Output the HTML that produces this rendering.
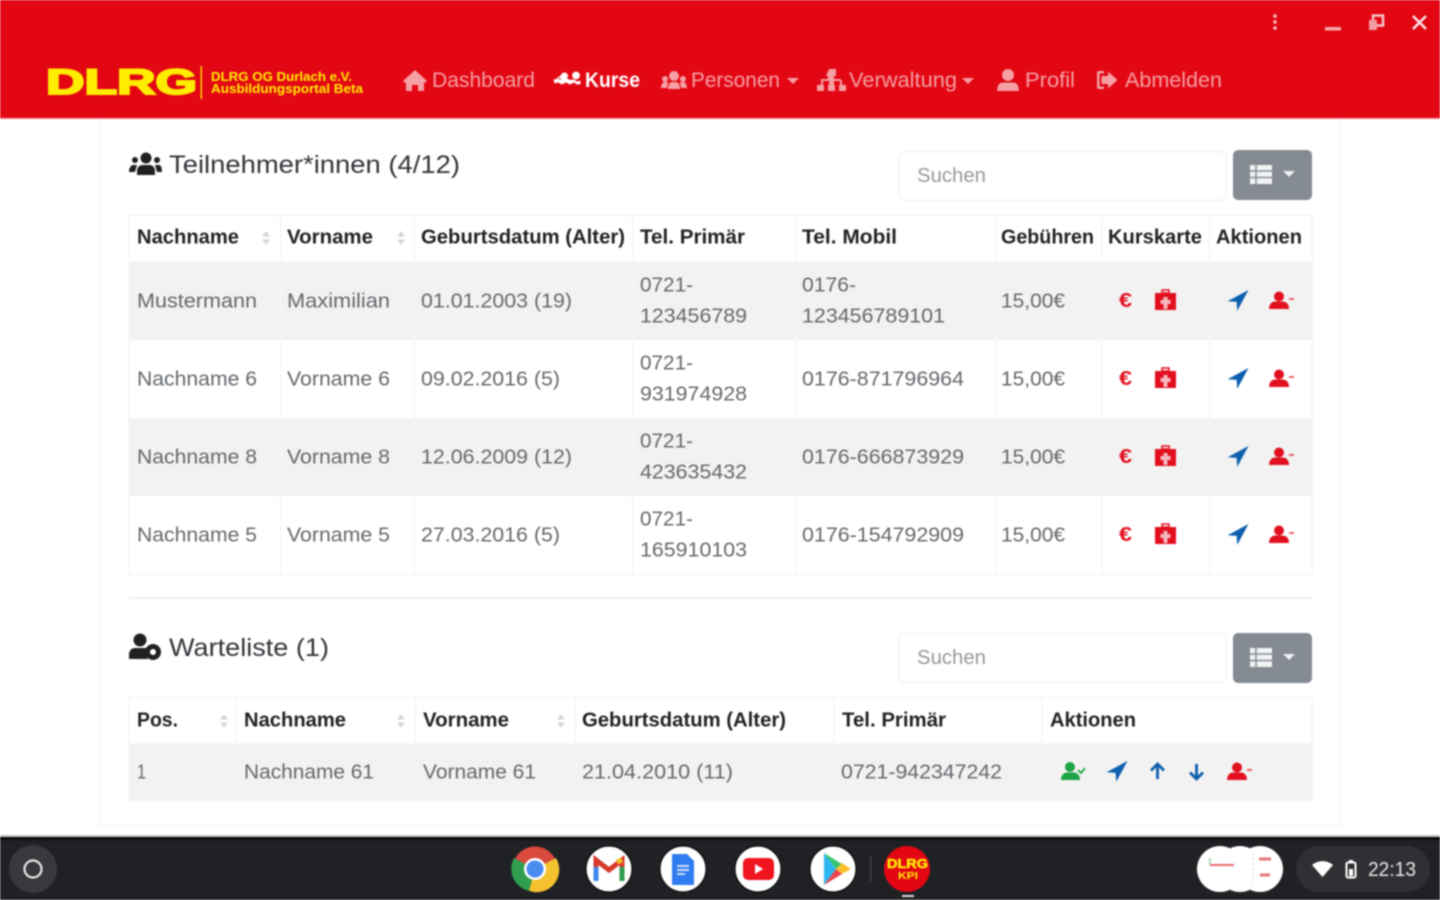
<!DOCTYPE html>
<html lang="de"><head><meta charset="utf-8"><title>DLRG Ausbildungsportal</title>
<style>
html,body{margin:0;padding:0;width:1440px;height:900px;overflow:hidden;background:#fff}
svg{display:block;filter:blur(.8px)}
text{font-family:"Liberation Sans",sans-serif;white-space:pre}
.t{font-size:20px;fill:#64686c;transform:translateY(-.5px)}
.h{font-size:20px;font-weight:bold;fill:#1f2124;transform:translateY(-.5px)}
.n{font-size:21px;fill:#f5a0a4}
.s{font-size:20px;fill:#94989c;transform:translateY(-1px)}
.l{stroke:#f5f5f5;stroke-width:1.500}
.w{stroke:#0c0c0d;stroke-width:1.200}
</style></head><body>
<svg width="1440" height="900" viewBox="0 0 1440 900" xmlns="http://www.w3.org/2000/svg">
<defs>
<g id="userminus"><circle cx="10" cy="5.500" r="5"/><path d="M0 18c0-5 3-7.500 6-7.500h8c3 0 6 2.500 6 7.500z"/><rect x="20" y="7" width="5" height="2" opacity=".65"/></g>
<path id="arrow" d="M18.500 0L0 10l8 .5.500 8z" stroke="currentColor" stroke-width=".8"/>
<g id="med"><path d="M0 2h21v17H0z"/><rect x="7" y="-1" width="7" height="3" fill="none" stroke="#e2101f" stroke-width="1.500"/><path d="M8.500 6h4v3h3v4h-3v5h-4v-5h-3V9h3z" fill="#f6b8bd"/></g>
<g id="acts">
<text x="1119" y="307" font-size="20" font-weight="bold" fill="#e2101f" textLength="13" lengthAdjust="spacingAndGlyphs">€</text>
<use href="#med" x="1155" y="291" fill="#e2101f"/>
<use href="#arrow" x="1229" y="291" fill="#0d5eaf" color="#0d5eaf"/>
<use href="#userminus" x="1269" y="291" fill="#e2101f"/>
</g>
<g id="sort" fill="#d5d6d8"><path d="M-4 -1.500L0 -7l4 5.500z"/><path d="M-4 1.500L0 7l4-5.500z"/></g>
<g id="listbtn"><rect x="0" y="0" width="79" height="50" rx="5" fill="#858b92"/><path d="M17 15h22v19H17z" fill="#f2f3f4"/><path d="M17 21h22M17 27.500h22M23 15v19" stroke="#858b92" stroke-width="1.500"/><path d="M50 21h12l-6 6z" fill="#f2f3f4"/></g>
</defs>

<rect width="1440" height="900" fill="#fff"/>
<rect x="0" y="0" width="1440" height="118" fill="#e30613"/>
<rect x="0" y="118" width="1440" height="1.500" fill="#f6b6b9"/>

<!-- window controls -->
<g fill="#f6c5c7"><circle cx="1275" cy="16" r="1.800"/><circle cx="1275" cy="22" r="1.800"/><circle cx="1275" cy="28" r="1.800"/>
<rect x="1325" y="27" width="16" height="3.500" fill="#f4a9ac"/></g>
<path d="M1373 15.500h10v10h-10z" fill="none" stroke="#f6c5c7" stroke-width="2.500"/><path d="M1369 20h8v10h-8z" fill="#f19ca0"/>
<path d="M1413 16l13 13M1426 16l-13 13" stroke="#fbe3e4" stroke-width="2.600"/>

<!-- logo -->
<text x="46" y="94" font-size="35" font-weight="bold" fill="#ffed00" stroke="#ffed00" stroke-width="2" textLength="151" lengthAdjust="spacingAndGlyphs">DLRG</text>
<rect x="200.500" y="66" width="1.500" height="33" fill="#ffd400"/>
<text x="211" y="81" font-size="13" font-weight="bold" fill="#ffed00" textLength="141" lengthAdjust="spacingAndGlyphs">DLRG OG Durlach e.V.</text>
<text x="211" y="93" font-size="13" font-weight="bold" fill="#ffed00" textLength="152" lengthAdjust="spacingAndGlyphs">Ausbildungsportal Beta</text>

<!-- nav -->
<g fill="#f5a0a4">
<path d="M403 81l12-11 12 11-2 2-1-.9V91h-6v-6h-6v6h-6v-8.900l-1 .9z"/>
<path d="M662 79a3 3 0 1 1 6 0 3 3 0 1 1-6 0zM680 79a3 3 0 1 1 6 0 3 3 0 1 1-6 0zM669 76a5 5 0 1 1 10 0 5 5 0 1 1-10 0zM661 88c0-4 2-6 4-6h3l-1 6zM681 88l-1-6h3c2 0 4 2 4 6zM668 89c0-5 2-7 4-7h4c2 0 4 2 4 7z"/>
<path d="M787 78h12l-6 6z"/>
<path d="M829 69h7v7h-2v3h7v1.500h1v4.500h4v6h-7v-6h1v-4h-6v4h1v6h-7v-6h1v-4h-6v4h1v6h-7v-6h4v-6h7v-3h-2z"/>
<path d="M962 78h12l-6 6z"/>
<circle cx="1008" cy="75" r="6"/><path d="M997 91c0-6 3-8.500 6-8.500h10c3 0 6 2.500 6 8.500z"/>
<path d="M1104 71h-5a2 2 0 0 0-2 2v14a2 2 0 0 0 2 2h5v-2.500h-4.500v-13h4.500z"/><path d="M1108 71.500l9.500 8.500-9.500 8.500V84h-6.500v-8h6.500z"/>
</g>
<text class="n" x="432" y="87" textLength="103" lengthAdjust="spacingAndGlyphs">Dashboard</text>
<path d="M557 80l6-7h3l2 3-2 2 3 2h5l3 2 3-1v3h-3l-3-2-4 2-4-2-4 2-4-2-3 1-1-3 3-1 3 1 2-1-3-2-2 2zM576 72a3.500 3.500 0 1 1 0 7 3.500 3.500 0 1 1 0-7z" fill="#fff" stroke="#fff" stroke-width=".8"/>
<text x="585" y="87" font-size="21" font-weight="bold" fill="#fff" textLength="55" lengthAdjust="spacingAndGlyphs">Kurse</text>
<text class="n" x="691" y="87" textLength="89" lengthAdjust="spacingAndGlyphs">Personen</text>
<text class="n" x="849" y="87" textLength="108" lengthAdjust="spacingAndGlyphs">Verwaltung</text>
<text class="n" x="1025" y="87" textLength="50" lengthAdjust="spacingAndGlyphs">Profil</text>
<text class="n" x="1125" y="87" textLength="97" lengthAdjust="spacingAndGlyphs">Abmelden</text>

<!-- card edges -->
<path d="M100.500 119v707h1239V119" fill="none" stroke="#f6f6f6" stroke-width="1.500"/>

<!-- section 1 heading -->
<g fill="#1f2022">
<circle cx="146" cy="158" r="5.500"/><circle cx="135" cy="160" r="3"/><circle cx="157" cy="160" r="3"/>
<path d="M137 175v-4c0-4 3-6 5-6h8c2 0 5 2 5 6v4zM129 172c0-4 2-7 4-7h4l-2 7zM157 172l-2-7h4c2 0 3 3 3 7z"/>
</g>
<text x="169" y="173" font-size="25" fill="#33353a" textLength="291" lengthAdjust="spacingAndGlyphs">Teilnehmer*innen (4/12)</text>
<rect x="898.500" y="151.500" width="328" height="49" rx="6" fill="#fff" stroke="#f3f3f3" stroke-width="1.500"/>
<text class="s" x="917" y="183" textLength="69" lengthAdjust="spacingAndGlyphs">Suchen</text>
<use href="#listbtn" x="1233" y="150"/>

<!-- table 1 -->
<rect x="129" y="262" width="1183" height="78" fill="#f2f2f2"/>
<rect x="129" y="418" width="1183" height="78" fill="#f2f2f2"/>
<path class="l" fill="none" d="M129 215.500h1183M129 262h1183M129 574.500h1183M129 215v360M1312 215v360M280.500 215v360M414.500 215v360M632.500 215v360M795.500 215v360M995.500 215v360M1101.500 215v360M1209.500 215v360"/>
<text class="h" x="137" y="244" textLength="102" lengthAdjust="spacingAndGlyphs">Nachname</text>
<text class="h" x="287" y="244" textLength="86" lengthAdjust="spacingAndGlyphs">Vorname</text>
<text class="h" x="421" y="244" textLength="204" lengthAdjust="spacingAndGlyphs">Geburtsdatum (Alter)</text>
<text class="h" x="640" y="244" textLength="105" lengthAdjust="spacingAndGlyphs">Tel. Primär</text>
<text class="h" x="802" y="244" textLength="95" lengthAdjust="spacingAndGlyphs">Tel. Mobil</text>
<text class="h" x="1001" y="244" textLength="93" lengthAdjust="spacingAndGlyphs">Gebühren</text>
<text class="h" x="1108" y="244" textLength="94" lengthAdjust="spacingAndGlyphs">Kurskarte</text>
<text class="h" x="1216" y="244" textLength="86" lengthAdjust="spacingAndGlyphs">Aktionen</text>
<use href="#sort" x="266" y="238"/><use href="#sort" x="401" y="238"/>

<text class="t" x="137" y="308" textLength="120" lengthAdjust="spacingAndGlyphs">Mustermann</text>
<text class="t" x="287" y="308" textLength="103" lengthAdjust="spacingAndGlyphs">Maximilian</text>
<text class="t" x="421" y="308" textLength="151" lengthAdjust="spacingAndGlyphs">01.01.2003 (19)</text>
<text class="t" x="640" y="292" textLength="53" lengthAdjust="spacingAndGlyphs">0721-</text>
<text class="t" x="640" y="323" textLength="107" lengthAdjust="spacingAndGlyphs">123456789</text>
<text class="t" x="802" y="292" textLength="54" lengthAdjust="spacingAndGlyphs">0176-</text>
<text class="t" x="802" y="323" textLength="143" lengthAdjust="spacingAndGlyphs">123456789101</text>
<text class="t" x="1001" y="308" textLength="64" lengthAdjust="spacingAndGlyphs">15,00€</text>
<use href="#acts"/>

<text class="t" x="137" y="386" textLength="120" lengthAdjust="spacingAndGlyphs">Nachname 6</text>
<text class="t" x="287" y="386" textLength="103" lengthAdjust="spacingAndGlyphs">Vorname 6</text>
<text class="t" x="421" y="386" textLength="139" lengthAdjust="spacingAndGlyphs">09.02.2016 (5)</text>
<text class="t" x="640" y="370" textLength="53" lengthAdjust="spacingAndGlyphs">0721-</text>
<text class="t" x="640" y="401" textLength="107" lengthAdjust="spacingAndGlyphs">931974928</text>
<text class="t" x="802" y="386" textLength="162" lengthAdjust="spacingAndGlyphs">0176-871796964</text>
<text class="t" x="1001" y="386" textLength="64" lengthAdjust="spacingAndGlyphs">15,00€</text>
<use href="#acts" y="78"/>

<text class="t" x="137" y="464" textLength="120" lengthAdjust="spacingAndGlyphs">Nachname 8</text>
<text class="t" x="287" y="464" textLength="103" lengthAdjust="spacingAndGlyphs">Vorname 8</text>
<text class="t" x="421" y="464" textLength="151" lengthAdjust="spacingAndGlyphs">12.06.2009 (12)</text>
<text class="t" x="640" y="448" textLength="53" lengthAdjust="spacingAndGlyphs">0721-</text>
<text class="t" x="640" y="479" textLength="107" lengthAdjust="spacingAndGlyphs">423635432</text>
<text class="t" x="802" y="464" textLength="162" lengthAdjust="spacingAndGlyphs">0176-666873929</text>
<text class="t" x="1001" y="464" textLength="64" lengthAdjust="spacingAndGlyphs">15,00€</text>
<use href="#acts" y="156"/>

<text class="t" x="137" y="542" textLength="120" lengthAdjust="spacingAndGlyphs">Nachname 5</text>
<text class="t" x="287" y="542" textLength="103" lengthAdjust="spacingAndGlyphs">Vorname 5</text>
<text class="t" x="421" y="542" textLength="139" lengthAdjust="spacingAndGlyphs">27.03.2016 (5)</text>
<text class="t" x="640" y="526" textLength="53" lengthAdjust="spacingAndGlyphs">0721-</text>
<text class="t" x="640" y="557" textLength="107" lengthAdjust="spacingAndGlyphs">165910103</text>
<text class="t" x="802" y="542" textLength="162" lengthAdjust="spacingAndGlyphs">0176-154792909</text>
<text class="t" x="1001" y="542" textLength="64" lengthAdjust="spacingAndGlyphs">15,00€</text>
<use href="#acts" y="234"/>

<rect x="129" y="597" width="1183" height="2" fill="#f0f0f0"/>

<!-- section 2 heading -->
<g fill="#1f2022">
<circle cx="140" cy="640" r="6.500"/>
<path d="M129 659v-4c0-5 3-7 6-7h10c2 0 4 1 5 2-3 2-4 6-2 9z"/>
<circle cx="153" cy="652" r="8"/>
</g>
<circle cx="153" cy="652" r="3" fill="#fff"/>
<text x="169" y="656" font-size="25" fill="#33353a" textLength="160" lengthAdjust="spacingAndGlyphs">Warteliste (1)</text>
<rect x="898.500" y="633.500" width="328" height="49" rx="6" fill="#fff" stroke="#f3f3f3" stroke-width="1.500"/>
<text class="s" x="917" y="665" textLength="69" lengthAdjust="spacingAndGlyphs">Suchen</text>
<use href="#listbtn" x="1233" y="633"/>

<!-- table 2 -->
<rect x="129" y="744" width="1183" height="56" fill="#f2f2f2"/>
<path class="l" fill="none" d="M129 697.500h1183M129 744h1183M129 800.500h1183M129 697v104M1312 697v104M236.500 697v104M415.500 697v104M575.500 697v104M834.500 697v104M1042.500 697v104"/>
<text class="h" x="137" y="727" textLength="41" lengthAdjust="spacingAndGlyphs">Pos.</text>
<text class="h" x="244" y="727" textLength="102" lengthAdjust="spacingAndGlyphs">Nachname</text>
<text class="h" x="423" y="727" textLength="86" lengthAdjust="spacingAndGlyphs">Vorname</text>
<text class="h" x="582" y="727" textLength="204" lengthAdjust="spacingAndGlyphs">Geburtsdatum (Alter)</text>
<text class="h" x="842" y="727" textLength="104" lengthAdjust="spacingAndGlyphs">Tel. Primär</text>
<text class="h" x="1050" y="727" textLength="86" lengthAdjust="spacingAndGlyphs">Aktionen</text>
<use href="#sort" x="224" y="721"/><use href="#sort" x="401" y="721"/><use href="#sort" x="561" y="721"/>
<text class="t" x="137" y="779" textLength="9" lengthAdjust="spacingAndGlyphs">1</text>
<text class="t" x="244" y="779" textLength="130" lengthAdjust="spacingAndGlyphs">Nachname 61</text>
<text class="t" x="423" y="779" textLength="113" lengthAdjust="spacingAndGlyphs">Vorname 61</text>
<text class="t" x="582" y="779" textLength="151" lengthAdjust="spacingAndGlyphs">21.04.2010 (11)</text>
<text class="t" x="841" y="779" textLength="161" lengthAdjust="spacingAndGlyphs">0721-942347242</text>
<g fill="#1ba345"><circle cx="1070" cy="767" r="5"/><path d="M1061 780c0-5 3-7.500 6-7.500h7c3 0 6 2.500 6 7.500z"/></g>
<path d="M1078 770l3 3 4-5" fill="none" stroke="#1ba345" stroke-width="1.800"/>
<use href="#arrow" x="1108" y="762" fill="#0d5eaf" color="#0d5eaf"/>
<path d="M1157.500 779v-14M1151 770.500l6.500-6.500 6.500 6.500" fill="none" stroke="#0d5eaf" stroke-width="2.800"/>
<path d="M1196.500 764v14M1190 772.500l6.500 6.500 6.500-6.500" fill="none" stroke="#0d5eaf" stroke-width="2.800"/>
<use href="#userminus" x="1227" y="762" fill="#e2101f"/>

<!-- shelf -->
<rect x="0" y="835" width="1440" height="2" fill="#c4c5c6"/>
<rect x="0" y="837" width="1440" height="63" fill="#202124"/>
<rect x="0" y="837" width="1440" height="3" fill="#0b0b0c"/>
<ellipse cx="33" cy="869" rx="24" ry="24" fill="#38393c"/>
<circle cx="33" cy="869" r="8.500" fill="none" stroke="#e8e8e8" stroke-width="2.200"/>

<!-- chrome -->
<circle cx="535" cy="869" r="22.500" fill="#d9493c"/>
<path d="M535 869L514 858a22.500 22.500 0 0 0 15 32.800z" fill="#2f9e4f"/>
<path d="M535 869l21-11a22.500 22.500 0 0 1-27 32.800z" fill="#f5c22f"/>
<circle cx="535" cy="869" r="11" fill="#fff"/><circle cx="535" cy="869" r="8.500" fill="#4a8bf0"/>

<!-- gmail -->
<circle class="w" cx="609" cy="869" r="23" fill="#fff"/>
<path d="M596 880v-20l13 10 13-10v20" fill="none" stroke="#d93a2e" stroke-width="5"/>
<path d="M596 881v-14" stroke="#3f86ee" stroke-width="5"/><path d="M622 881v-14" stroke="#2d9d4e" stroke-width="5"/>
<path d="M617 862l5-2" stroke="#f6bf26" stroke-width="5"/>

<!-- docs -->
<circle class="w" cx="683" cy="869" r="23" fill="#fff"/>
<path d="M673 854h14l7 7v23a1 1 0 0 1-1 1h-20a1 1 0 0 1-1-1v-29a1 1 0 0 1 1-1z" fill="#2f7bf0"/>
<path d="M677 866h12M677 870h12M677 874h8" stroke="#cfe0fb" stroke-width="2"/>

<!-- youtube -->
<circle class="w" cx="758" cy="869" r="23" fill="#fff"/>
<rect x="743" y="858" width="31" height="22" rx="5" fill="#f0141e"/>
<path d="M755 864l8 5-8 5z" fill="#fff"/>

<!-- play -->
<circle class="w" cx="833" cy="869" r="23" fill="#fff"/>
<path d="M824 853l12 16-12 16z" fill="#2bb7f0"/>
<path d="M824 853l12 16 6-5z" fill="#35c56c"/><path d="M824 885l12-16 6 5z" fill="#e9424f"/>
<path d="M842 863l9 6-9 5-6-5z" fill="#fbc02d"/>

<rect x="870" y="856" width="1.500" height="26" fill="#3f4043"/>

<!-- dlrg app -->
<circle cx="907" cy="869" r="23" fill="#e30613"/>
<text x="887" y="868" font-size="13" font-weight="bold" fill="#ffed00" stroke="#ffed00" stroke-width=".5" textLength="41" lengthAdjust="spacingAndGlyphs">DLRG</text>
<text x="898" y="879" font-size="10" font-weight="bold" fill="#ffed00" textLength="20" lengthAdjust="spacingAndGlyphs">KPI</text>
<rect x="902" y="895" width="12" height="2" fill="#dcdcdc"/>

<!-- tray -->
<g fill="#fff"><circle cx="1220" cy="869" r="23"/><circle cx="1240" cy="869" r="23"/><circle cx="1260" cy="869" r="23"/></g>
<path d="M1210 865h24" stroke="#e86a6e" stroke-width="2"/><path d="M1210 858v6" stroke="#8cc9a0" stroke-width="1.500"/>
<path d="M1259 859h12M1260 875h10" stroke="#e8767a" stroke-width="3"/>
<path d="M1253 853v32" stroke="#d8d8d8" stroke-width="1" stroke-dasharray="2 3"/>

<!-- status -->
<rect x="1296" y="846" width="134" height="46" rx="23" fill="#2f3033"/>
<path d="M1312 865a16 16 0 0 1 21 0l-10.500 12z" fill="#fff"/>
<rect x="1346.500" y="862.500" width="9" height="15" rx="1.500" fill="none" stroke="#fff" stroke-width="2"/>
<rect x="1349" y="860" width="4" height="3" fill="#fff"/>
<rect x="1349" y="869" width="4" height="7" fill="#fff"/>
<text x="1368" y="876" font-size="20" fill="#e8e8e8" textLength="48" lengthAdjust="spacingAndGlyphs">22:13</text>
</svg>
</body></html>
